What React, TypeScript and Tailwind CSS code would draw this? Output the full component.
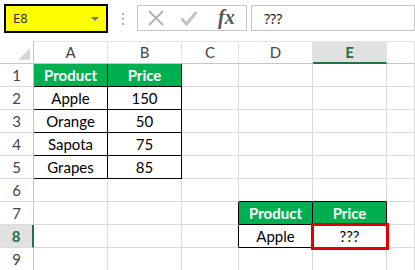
import type { ReactNode } from 'react';

const COLS = ['A', 'B', 'C', 'D', 'E', ''];
const ROWS = [1, 2, 3, 4, 5, 6, 7, 8, 9];

type CellDef = { text?: string; head?: boolean; table?: boolean };

const cells: Record<string, CellDef> = {
  A1: { text: 'Product', head: true, table: true },
  B1: { text: 'Price', head: true, table: true },
  A2: { text: 'Apple', table: true },
  B2: { text: '150', table: true },
  A3: { text: 'Orange', table: true },
  B3: { text: '50', table: true },
  A4: { text: 'Sapota', table: true },
  B4: { text: '75', table: true },
  A5: { text: 'Grapes', table: true },
  B5: { text: '85', table: true },
  D7: { text: 'Product', head: true, table: true },
  E7: { text: 'Price', head: true, table: true },
  D8: { text: 'Apple', table: true },
  E8: { text: '???', table: true },
};

// cells sitting just above / left of the second table carry its outer edge
const blackBottom = ['D6', 'E6'];
const blackRight = ['C7', 'C8'];

function Cell({ id }: { id: string }) {
  const c = cells[id];
  const br = c?.table || blackRight.includes(id) ? 'border-r-black' : 'border-r-[#dadada]';
  const bb = c?.table || blackBottom.includes(id) ? 'border-b-black' : 'border-b-[#dadada]';
  const fill = c?.head ? 'bg-[#00b050] text-white font-bold' : 'bg-white text-black';
  const sel = id === 'E8' ? 'outline-[3px] outline-solid outline-[#e00000] -outline-offset-1 z-10' : '';
  return (
    <div className={`relative flex items-center justify-center border-r border-b ${br} ${bb} ${fill} ${sel} text-[15px] leading-none`}>
      {c?.text}
    </div>
  );
}

function ColHead({ label }: { label: string }) {
  const active = label === 'E';
  return (
    <div
      className={`flex items-center justify-center border-t border-t-[#e3e3e3] border-r border-r-[#e3e3e3] text-[15px] ${
        active
          ? 'bg-[#e1e1e1] text-[#217346] font-bold border-b-2 border-b-[#217346]'
          : 'bg-white text-[#444] border-b border-b-[#c6c6c6]'
      }`}
    >
      {label}
    </div>
  );
}

function RowHead({ n }: { n: number }) {
  const active = n === 8;
  return (
    <div
      className={`flex items-center justify-center border-b border-b-[#dadada] text-[15px] ${
        active
          ? 'bg-[#e1e1e1] text-[#217346] font-bold border-r-2 border-r-[#217346]'
          : 'bg-white text-[#444] border-r border-r-[#c6c6c6]'
      }`}
    >
      {n}
    </div>
  );
}

function ToolBox({ children, className }: { children: ReactNode; className?: string }) {
  return <div className={`flex items-center border border-[#c6c6c6] bg-white ${className ?? ''}`}>{children}</div>;
}

export default function App() {
  return (
    <div className="w-[415px] h-[270px] overflow-hidden bg-white" style={{ fontFamily: 'Lato, "Open Sans", sans-serif' }}>
      {/* name box + formula bar */}
      <div className="h-[41px] flex items-start pt-[4px] pl-[4px]">
        <div className="w-[104px] h-[29px] bg-[#ffff00] border-2 border-black flex items-center justify-between pl-[7px] pr-[7px]">
          <span className="text-[13px] text-[#333]" style={{ fontFamily: '"Noto Sans", sans-serif' }}>E8</span>
          <span className="w-0 h-0 border-l-[4px] border-r-[4px] border-t-[4px] border-l-transparent border-r-transparent border-t-[#777]" />
        </div>
        <div className="w-[29px] h-[29px] flex flex-col items-center justify-center gap-[3px]">
          <span className="w-[2px] h-[2px] bg-[#b4b4b4]" />
          <span className="w-[2px] h-[2px] bg-[#b4b4b4]" />
          <span className="w-[2px] h-[2px] bg-[#b4b4b4]" />
        </div>
        <ToolBox className="mt-[1px] w-[110px] h-[26px] pl-[9px]">
          <svg width="18" height="16" viewBox="0 0 18 16">
            <path d="M2 1 L16 15 M16 1 L2 15" stroke="#b3b3b3" strokeWidth="2" fill="none" />
          </svg>
          <svg width="18" height="16" viewBox="0 0 18 16" className="ml-[15px]">
            <path d="M1.5 8.5 L6.5 14 L16.5 2" stroke="#c2c2c2" strokeWidth="3" fill="none" />
          </svg>
          <span className="ml-[20px] text-[20px] italic font-bold text-[#555] leading-none -mt-[2px]" style={{ fontFamily: '"Liberation Serif", serif' }}>
            fx
          </span>
        </ToolBox>
        <ToolBox className="mt-[1px] ml-[4px] flex-1 h-[26px] pl-[12px]">
          <span className="text-[14px] text-[#222]" style={{ fontFamily: '"Noto Sans", sans-serif' }}>???</span>
        </ToolBox>
      </div>

      {/* sheet grid */}
      <div className="grid grid-cols-[34px_74px_74px_57px_74px_74px_1fr] auto-rows-[23px]">
        <div className="flex items-end justify-end pr-[3px] pb-[3px] border-r border-b border-[#c6c6c6] bg-white">
          <svg width="12" height="12" viewBox="0 0 12 12">
            <path d="M12 0 L12 12 L0 12 Z" fill="#d6d6d6" />
          </svg>
        </div>
        {COLS.map((c, i) => (
          <ColHead key={i} label={c} />
        ))}
        {ROWS.map((r) => [
          <RowHead key={`h${r}`} n={r} />,
          ...['A', 'B', 'C', 'D', 'E', 'F'].map((c) => <Cell key={`${c}${r}`} id={`${c}${r}`} />),
        ])}
      </div>
    </div>
  );
}
